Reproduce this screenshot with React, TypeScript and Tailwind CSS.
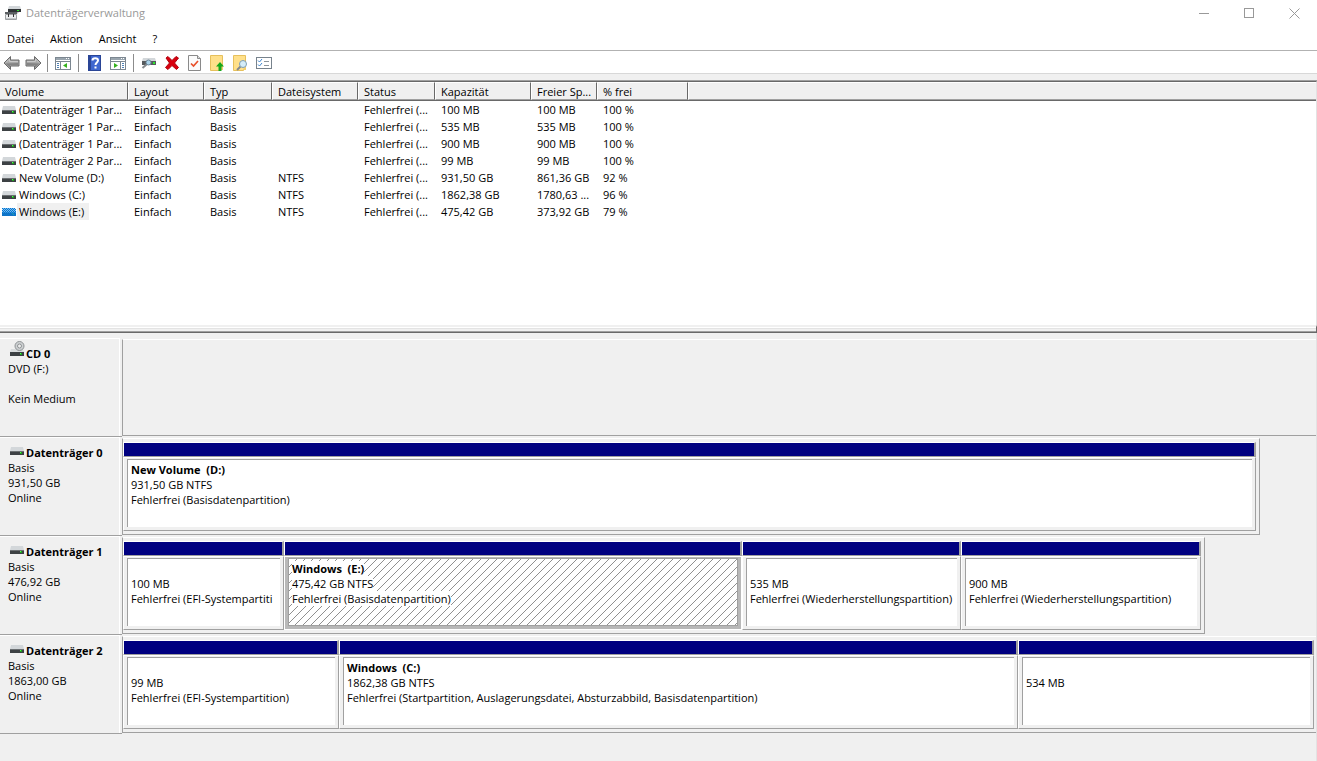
import type { ReactNode } from "react";

interface Volume {
  name: string;
  fs: string;
  capacity: string;
  free: string;
  percent: string;
  selected?: boolean;
}

interface Partition {
  title?: string;
  lines: string[];
  size: number;
  selected?: boolean;
}

interface Disk {
  name: string;
  info: string[];
  share: number;
  partitions: Partition[];
}

const columns = ["Volume", "Layout", "Typ", "Dateisystem", "Status", "Kapazität", "Freier Sp...", "% frei"];

const volumes: Volume[] = [
  { name: "(Datenträger 1 Par...", fs: "", capacity: "100 MB", free: "100 MB", percent: "100 %" },
  { name: "(Datenträger 1 Par...", fs: "", capacity: "535 MB", free: "535 MB", percent: "100 %" },
  { name: "(Datenträger 1 Par...", fs: "", capacity: "900 MB", free: "900 MB", percent: "100 %" },
  { name: "(Datenträger 2 Par...", fs: "", capacity: "99 MB", free: "99 MB", percent: "100 %" },
  { name: "New Volume (D:)", fs: "NTFS", capacity: "931,50 GB", free: "861,36 GB", percent: "92 %" },
  { name: "Windows (C:)", fs: "NTFS", capacity: "1862,38 GB", free: "1780,63 ...", percent: "96 %" },
  { name: "Windows (E:)", fs: "NTFS", capacity: "475,42 GB", free: "373,92 GB", percent: "79 %", selected: true },
];

const disks: Disk[] = [
  {
    name: "Datenträger 0",
    info: ["Basis", "931,50 GB", "Online"],
    share: 95.31,
    partitions: [{ title: "New Volume  (D:)", lines: ["931,50 GB NTFS", "Fehlerfrei (Basisdatenpartition)"], size: 1133 }],
  },
  {
    name: "Datenträger 1",
    info: ["Basis", "476,92 GB", "Online"],
    share: 90.7,
    partitions: [
      { lines: ["100 MB", "Fehlerfrei (EFI-Systempartiti"], size: 161 },
      { title: "Windows  (E:)", lines: ["475,42 GB NTFS", "Fehlerfrei (Basisdatenpartition)"], size: 458, selected: true },
      { lines: ["535 MB", "Fehlerfrei (Wiederherstellungspartition)"], size: 219 },
      { lines: ["900 MB", "Fehlerfrei (Wiederherstellungspartition)"], size: 240 },
    ],
  },
  {
    name: "Datenträger 2",
    info: ["Basis", "1863,00 GB", "Online"],
    share: 100,
    partitions: [
      { lines: ["99 MB", "Fehlerfrei (EFI-Systempartition)"], size: 216 },
      {
        title: "Windows  (C:)",
        lines: ["1862,38 GB NTFS", "Fehlerfrei (Startpartition, Auslagerungsdatei, Absturzabbild, Basisdatenpartition)"],
        size: 679,
      },
      { lines: ["534 MB"], size: 296 },
    ],
  },
];

function DriveIcon({ selected }: { selected?: boolean }) {
  return (
    <svg width="14" height="8" viewBox="0 0 14 8" className="shrink-0" aria-hidden="true">
      <path d="M1 0h12l1 4H0z" fill={selected ? "#7db9e8" : "#d3d7da"} />
      <rect x="0" y="4" width="14" height="4" fill={selected ? "#1a6fb8" : "#3d4144"} />
      <path d="M0 4.500h14" stroke={selected ? "#3f93d6" : "#6b6f72"} />
      <rect x="10" y="5" width="2" height="2" fill={selected ? "#2b9f9a" : "#1f9e1f"} />
      <rect x="10" y="5" width="1" height="1" fill={selected ? "#2b9f9a" : "#4dff4d"} />
      {selected && (
        <>
          <path d="M0 .5h14M0 2.500h14M0 4.500h14M0 6.500h14" stroke="#0078d7" strokeDasharray="1 1" />
          <path d="M1 1.500h13M1 3.500h13M1 5.500h13M1 7.500h13" stroke="#0078d7" strokeDasharray="1 1" />
        </>
      )}
    </svg>
  );
}

function CdIcon() {
  return (
    <svg width="15" height="15" viewBox="0 0 15 15" className="shrink-0" aria-hidden="true">
      <path d="M1 8h12l1 3H0z" fill="#d9dcde" />
      <circle cx="9.5" cy="5" r="4.5" fill="#cdd0d2" stroke="#8f9395" />
      <circle cx="9.5" cy="5" r="2" fill="#eee" stroke="#8f9395" />
      <rect x="0" y="11" width="14" height="4" fill="#3d4144" />
      <rect x="10" y="12" width="2" height="2" fill="#1f9e1f" />
      <rect x="10" y="12" width="1" height="1" fill="#4dff4d" />
    </svg>
  );
}

function AppIcon() {
  return (
    <svg width="16" height="16" viewBox="0 0 16 16" aria-hidden="true">
      <path d="M4 1h11l1 3H3z" fill="#d3d7da" />
      <rect x="3" y="4" width="13" height="3" fill="#2f3335" />
      <rect x="12" y="5" width="2" height="1" fill="#2ee62e" />
      <rect x="0" y="7" width="12" height="2" fill="#5b5f62" />
      <path d="M12 7h2l-2 2z" fill="#b5b8ba" />
      <path d="M.5 9.500h11v5H.5z" fill="#eceeef" stroke="#9da0a2" />
      <path d="M3.500 9v3M8.500 9v3" stroke="#333" />
      <path d="M1 13.500h10" stroke="#c5c8ca" />
    </svg>
  );
}

function ArrowIcon({ flip }: { flip?: boolean }) {
  return (
    <svg width="17" height="16" viewBox="0 0 17 16" className={flip ? "-scale-x-100" : ""} aria-hidden="true">
      <path d="M1 8 7.500 1.500V5h8.500v6H7.500v3.500z" fill="#a8a8a8" stroke="#6b6b6b" strokeLinejoin="round" />
      <path d="M2.500 8.500 7 12.500V10h8V8z" fill="#848484" />
      <path d="M3 7.500 6.500 4v2.500h8.500" fill="none" stroke="#c9c9c9" />
    </svg>
  );
}

function PaneIcon({ right }: { right?: boolean }) {
  return (
    <svg width="16" height="13" viewBox="0 0 16 13" aria-hidden="true">
      <rect x=".5" y=".5" width="15" height="12" fill="#fff" stroke="#7c8791" />
      <rect x="1" y="1" width="14" height="2" fill="#9aa5ae" />
      <path d="M11 1.500h1M13 1.500h1" stroke="#fff" />
      <path d="M1 4.500h14" stroke="#7c8791" />
      {right ? (
        <>
          <path d="M10.500 5v8" stroke="#7c8791" />
          <path d="M4 6v5l4-2.500z" fill="#36b21e" />
          <path d="M12 6.500h2M12 8.500h2M12 10.500h2" stroke="#4f81b5" />
        </>
      ) : (
        <>
          <path d="M5.500 5v8" stroke="#7c8791" />
          <path d="M12 6v5L8 8.500z" fill="#36b21e" />
          <path d="M2 6.500h2M2 8.500h2M2 10.500h2" stroke="#4f81b5" />
        </>
      )}
    </svg>
  );
}

function HelpIcon() {
  return (
    <svg width="13" height="16" viewBox="0 0 13 16" aria-hidden="true">
      <rect x=".5" y=".5" width="12" height="15" fill="#3f67cf" stroke="#2a4596" />
      <rect x="1" y="1" width="2" height="14" fill="#2a4596" />
      <path d="M4.500 5.500C4.500 2.500 10 2.500 10 5.500 10 7.500 7.500 7.500 7.500 10" fill="none" stroke="#fff" strokeWidth="2" />
      <rect x="6.500" y="11.500" width="2" height="2" fill="#fff" />
    </svg>
  );
}

function SearchDiskIcon() {
  return (
    <svg width="16" height="12" viewBox="0 0 16 12" aria-hidden="true">
      <path d="M2 1h12l1 3H1z" fill="#d3d7da" />
      <rect x="1" y="4" width="14" height="4" fill="#55595c" />
      <rect x="12" y="5" width="2" height="2" fill="#2ee62e" />
      <path d="M5.500 7.500 1.500 11" stroke="#84898d" strokeWidth="2" />
      <circle cx="7.500" cy="5.500" r="2.500" fill="#a9d2ea" stroke="#6d8799" />
    </svg>
  );
}

function DeleteIcon() {
  return (
    <svg width="14" height="14" viewBox="0 0 14 14" aria-hidden="true">
      <path d="M1 2 3 .5 7 4.500 11 .5 13.500 2 9.500 7 13.500 11.500 11.500 13.500 7 9.500 3 13.500.5 11.500 4.500 7z" fill="#d9000f" stroke="#b0000c" />
    </svg>
  );
}

function CheckPageIcon() {
  return (
    <svg width="13" height="16" viewBox="0 0 13 16" aria-hidden="true">
      <path d="M.5.5h9l3 3v12H.5z" fill="#fbfbfb" stroke="#8a8a8a" />
      <path d="M9.500.5v3h3" fill="#ddd" stroke="#8a8a8a" />
      <path d="M3 8.500 5.500 11 10 6" fill="none" stroke="#e8502a" strokeWidth="1.700" />
    </svg>
  );
}

function FolderIcon({ search }: { search?: boolean }) {
  return (
    <svg width="15" height="16" viewBox="0 0 15 16" aria-hidden="true">
      <path d="M.5.5h12v10l-2 5H.5z" fill="#ffe08a" stroke="#e6c05c" />
      <path d="M11 10h2v5h-2z" fill="#f3cf6e" />
      {search ? (
        <>
          <path d="M7.500 11.500 4 15" stroke="#84898d" strokeWidth="2" />
          <circle cx="10" cy="9" r="3.500" fill="#d4ecf8" stroke="#7d9db3" />
        </>
      ) : (
        <path d="M10 7 14 11.500h-2.500V16h-3v-4.500H6z" fill="#17a81a" />
      )}
    </svg>
  );
}

function ListIcon() {
  return (
    <svg width="16" height="12" viewBox="0 0 16 12" aria-hidden="true">
      <rect x=".5" y=".5" width="15" height="11" fill="#fff" stroke="#77828c" />
      <path d="M2 3.500 3.500 5 6 2M2 7.500 3.500 9 6 6" fill="none" stroke="#3d86d0" />
      <path d="M8 4.500h5M8 8.500h5" stroke="#8d969e" />
    </svg>
  );
}

function ToolButton({ label, children }: { label: string; children: ReactNode }) {
  return (
    <button type="button" aria-label={label} className="flex h-5 flex-1 items-center justify-center">
      {children}
    </button>
  );
}

function Separator() {
  return <div className="mx-[3px] h-[18px] w-px bg-[#8c8c8c]" />;
}

function VolumeTable() {
  return (
    <table className="w-full table-fixed border-collapse text-left">
      <colgroup>
        <col className="w-[128px]" />
        <col className="w-[76px]" />
        <col className="w-[68px]" />
        <col className="w-[86px]" />
        <col className="w-[77px]" />
        <col className="w-[96px]" />
        <col className="w-[66px]" />
        <col className="w-[91px]" />
        <col />
      </colgroup>
      <thead>
        <tr>
          {columns.map((c, i) => (
            <th key={c} className="border-b border-[#696969] p-0 font-normal">
              <div
                className={`h-[18px] border-t border-r border-b border-t-white border-r-[#696969] border-b-[#a0a0a0] bg-[#f0f0f0] pl-[5px] leading-[17px] whitespace-nowrap ${
                  i === 0 ? "" : "border-l border-l-white"
                }`}
              >
                {c}
              </div>
            </th>
          ))}
          <th className="border-b border-[#696969] p-0">
            <div className="h-[18px] border-t border-b border-l border-t-white border-b-[#a0a0a0] border-l-white bg-[#f0f0f0]" />
          </th>
        </tr>
      </thead>
      <tbody className="whitespace-nowrap">
        {volumes.map((v, i) => (
          <tr key={i} className="h-[17px] leading-[17px]">
            <td className="p-0 pl-[2px]">
              <div className="flex items-center gap-px">
                <DriveIcon selected={v.selected} />
                <span className={v.selected ? "bg-[#f0f0f0] pr-[5px] pl-[2px]" : "pl-[2px]"}>{v.name}</span>
              </div>
            </td>
            <td className="p-0 pl-[6px]">Einfach</td>
            <td className="p-0 pl-[6px]">Basis</td>
            <td className="p-0 pl-[6px]">{v.fs}</td>
            <td className="p-0 pl-[6px]">Fehlerfrei (...</td>
            <td className="p-0 pl-[6px]">{v.capacity}</td>
            <td className="p-0 pl-[6px]">{v.free}</td>
            <td className="p-0 pl-[6px]">{v.percent}</td>
            <td />
          </tr>
        ))}
      </tbody>
    </table>
  );
}

function PartitionBox({ partition }: { partition: Partition }) {
  const { title, lines, size, selected } = partition;
  return (
    <div className="flex min-w-0 flex-col" style={{ flex: `${size} 1 0px` }}>
      <div className="h-[15px] border border-r-2 border-t-white border-r-[#a0a0a0] border-b-[#a0a0a0] border-l-white bg-[#000080]" />
      <div
        className={`flex-1 border border-t-white border-l-white px-[3px] pt-px pb-[3px] ${
          selected ? "border-r-white border-b-white bg-[#b8b8b8]" : "border-r-[#a0a0a0] border-b-[#a0a0a0]"
        }`}
      >
        <div
          className={`h-full overflow-hidden border-t border-l border-[#a0a0a0] bg-white pt-[2px] pl-[3px] ${
            selected
              ? "border-r border-b bg-[linear-gradient(135deg,transparent_45%,#909090_45%,#909090_55%,transparent_55%)] bg-[size:8px_8px]"
              : ""
          }`}
        >
          <div className="flex flex-col items-start leading-[15px] whitespace-pre">
            <b className={title ? "bg-white" : "h-[15px]"}>{title}</b>
            {lines.map((l) => (
              <span key={l} className="bg-white">{l}</span>
            ))}
          </div>
        </div>
      </div>
    </div>
  );
}

function DiskLabel({ icon, name, info }: { icon: ReactNode; name: string; info: string[] }) {
  return (
    <div className="w-[122px] shrink-0 border-b border-[#a0a0a0] pr-[2px]">
      <div className="h-full border-t border-r border-white pt-[7px] pl-2 leading-[15px]">
        <div className="flex h-[15px] items-end gap-px pl-[2px] font-bold">
          <span className="flex w-[15px] shrink-0 pb-[5px]">{icon}</span>
          <span>{name}</span>
        </div>
        {info.map((l, i) => (
          <div key={i} className="h-[15px]">{l}</div>
        ))}
      </div>
    </div>
  );
}

function DiskRow({ disk }: { disk: Disk }) {
  const full = disk.share === 100;
  return (
    <div className="flex h-[99px]">
      <DiskLabel icon={<DriveIcon />} name={disk.name} info={disk.info} />
      <div className="min-w-0 flex-1 py-px">
        <div
          className={`flex h-full border-t border-b border-l border-t-white border-b-[#a0a0a0] border-l-[#a0a0a0] py-[3px] ${
            full ? "pr-[2px]" : "border-r border-r-[#a0a0a0] pr-[3px]"
          }`}
          style={{ width: `${disk.share}%` }}
        >
          {disk.partitions.map((p, i) => (
            <PartitionBox key={i} partition={p} />
          ))}
        </div>
      </div>
    </div>
  );
}

export default function App() {
  return (
    <div className="flex min-h-screen flex-col bg-[#f0f0f0] font-['Open_Sans','Noto_Sans',sans-serif] text-[11px] text-black">
      <header className="flex h-[26px] items-center bg-white pl-[5px]">
        <AppIcon />
        <h1 className="flex-1 pl-[5px] text-[#999]">Datenträgerverwaltung</h1>
        <button type="button" aria-label="Minimieren" className="flex h-6 w-[45px] items-center justify-center">
          <svg width="11" height="11" viewBox="0 0 11 11"><path d="M0 5.500h10" stroke="#999" /></svg>
        </button>
        <button type="button" aria-label="Maximieren" className="flex h-6 w-[45px] items-center justify-center">
          <svg width="11" height="11" viewBox="0 0 11 11"><rect x=".5" y=".5" width="9" height="9" fill="none" stroke="#999" /></svg>
        </button>
        <button type="button" aria-label="Schließen" className="flex h-6 w-[45px] items-center justify-center">
          <svg width="11" height="11" viewBox="0 0 11 11"><path d="m.5.5 10 10m0-10-10 10" stroke="#999" /></svg>
        </button>
      </header>

      <nav className="flex h-[25px] items-center gap-4 border-b border-[#b2b2b2] bg-white pt-[2px] pl-[7px]">
        <button type="button">Datei</button>
        <button type="button">Aktion</button>
        <button type="button">Ansicht</button>
        <button type="button">?</button>
      </nav>

      <div className="flex h-[23px] items-center border-b border-[#d8d8d8] bg-white pt-[2px]">
        <div className="flex w-11">
          <ToolButton label="Zurück"><ArrowIcon /></ToolButton>
          <ToolButton label="Vorwärts"><ArrowIcon flip /></ToolButton>
        </div>
        <Separator />
        <div className="flex w-6">
          <ToolButton label="Konsolenstruktur"><PaneIcon /></ToolButton>
        </div>
        <Separator />
        <div className="flex w-12">
          <ToolButton label="Hilfe"><HelpIcon /></ToolButton>
          <ToolButton label="Aktionsbereich"><PaneIcon right /></ToolButton>
        </div>
        <Separator />
        <div className="flex w-[138px]">
          <ToolButton label="Datenträger überprüfen"><SearchDiskIcon /></ToolButton>
          <ToolButton label="Löschen"><DeleteIcon /></ToolButton>
          <ToolButton label="Eigenschaften"><CheckPageIcon /></ToolButton>
          <ToolButton label="Öffnen"><FolderIcon /></ToolButton>
          <ToolButton label="Durchsuchen"><FolderIcon search /></ToolButton>
          <ToolButton label="Liste"><ListIcon /></ToolButton>
        </div>
      </div>

      <main className="mt-[6px] flex flex-1 flex-col border-t border-[#a0a0a0]">
        <section className="min-h-[244px] border-t border-r border-t-[#696969] border-r-[#e3e3e3] bg-white">
          <VolumeTable />
        </section>
        {/* splitter */}
        <div className="border-t-2 border-r border-b border-t-[#f0f0f0] border-r-[#696969] border-b-[#696969]">
          <div className="h-[5px] border-t border-b border-t-white border-b-[#a0a0a0]">
            <div className="border-t border-[#e3e3e3]" />
          </div>
        </div>
        <section className="flex-1 border-r border-[#e3e3e3] pt-[5px]">
          <div className="flex h-[99px]">
            <DiskLabel icon={<CdIcon />} name="CD 0" info={["DVD (F:)", "", "Kein Medium"]} />
            <div className="flex-1 py-px">
              <div className="h-full border-t border-b border-l border-t-white border-b-[#a0a0a0] border-l-[#a0a0a0]" />
            </div>
          </div>
          {disks.map((d) => (
            <DiskRow key={d.name} disk={d} />
          ))}
        </section>
      </main>
    </div>
  );
}
